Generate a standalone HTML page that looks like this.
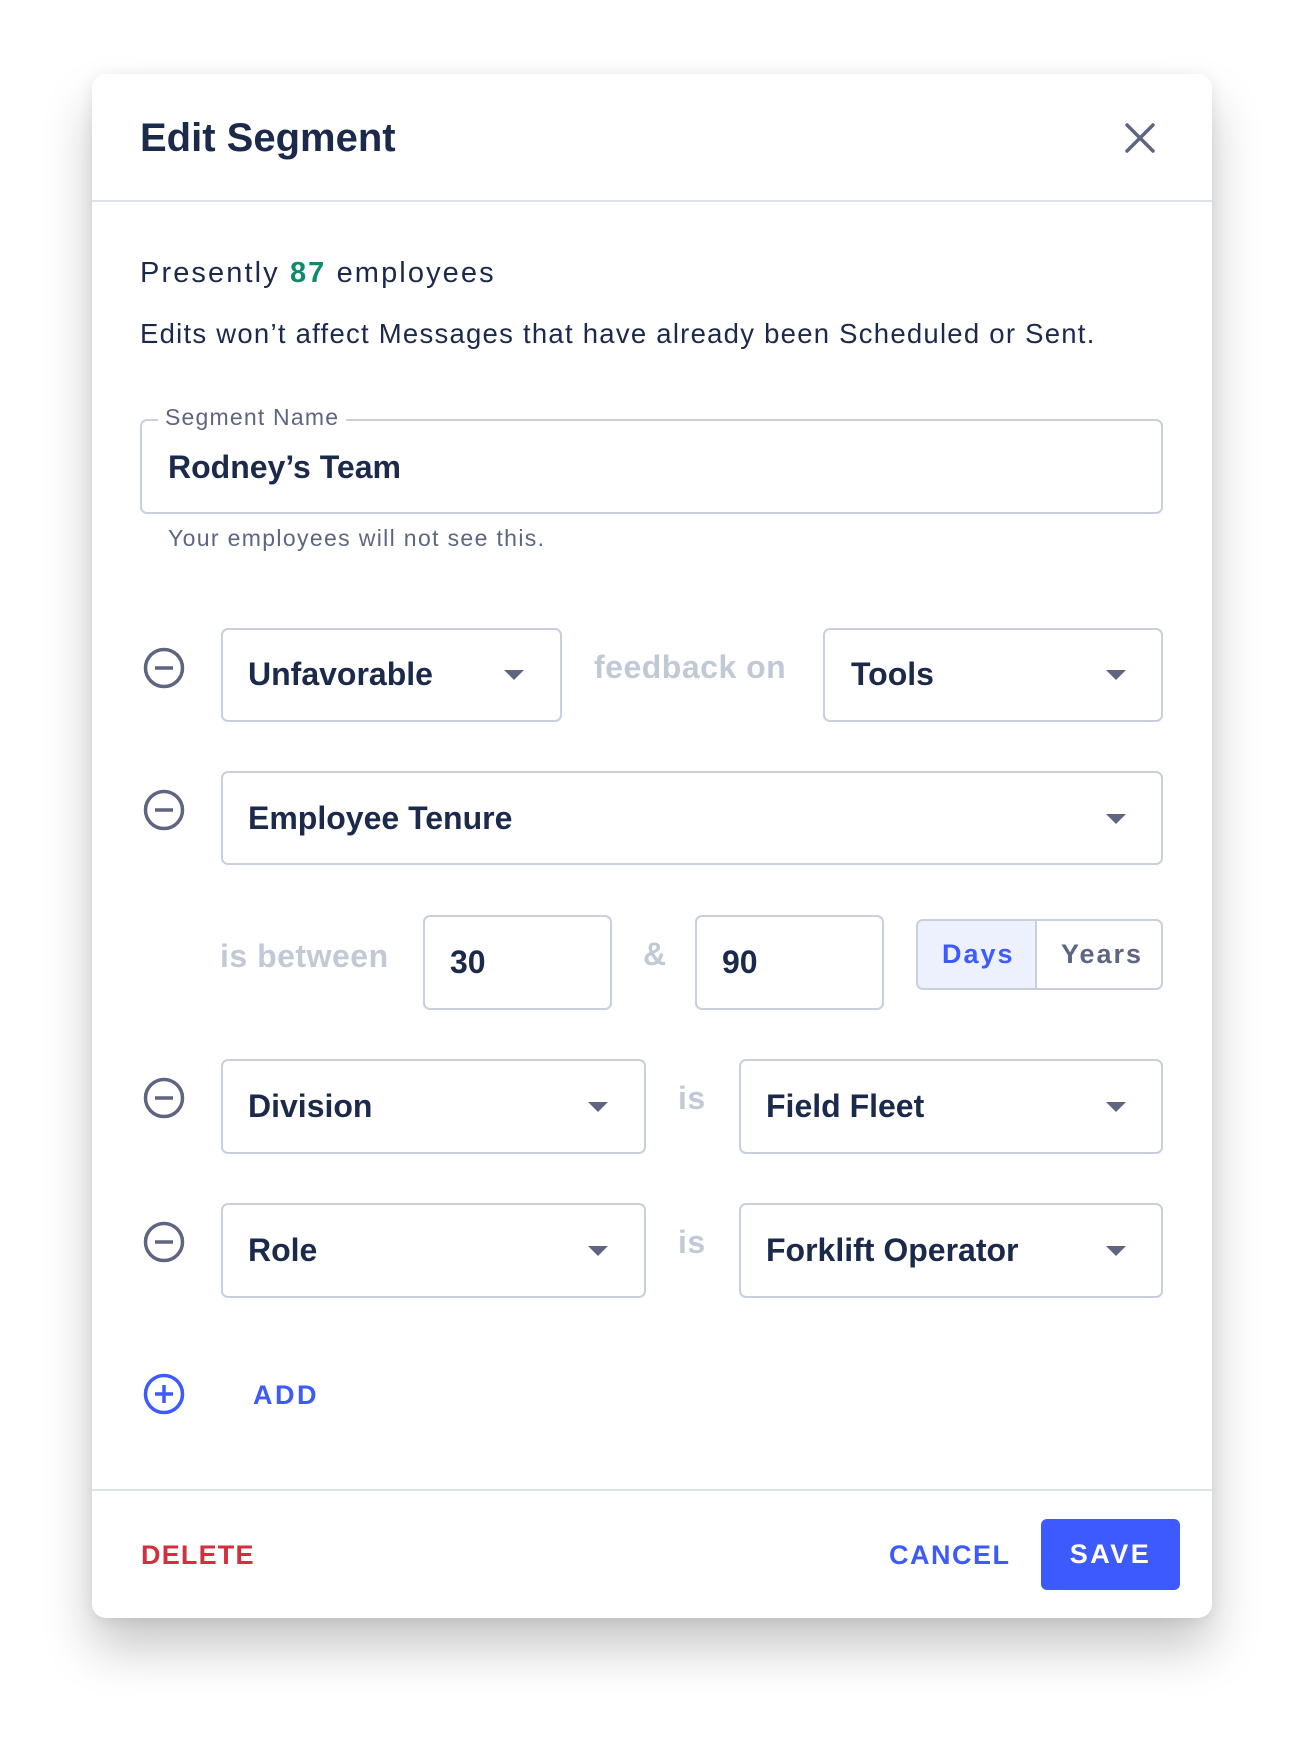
<!DOCTYPE html>
<html><head><meta charset="utf-8"><style>
*{box-sizing:border-box;margin:0;padding:0}
body{width:1304px;height:1742px;background:#fff;font-family:"Liberation Sans",sans-serif;position:relative;overflow:hidden;color:#1b2a4a}
.card{position:absolute;left:92px;top:74px;width:1120px;height:1544px;background:#fff;border-radius:14px;box-shadow:0 30px 50px rgba(0,0,0,0.22),0 2px 14px rgba(0,0,0,0.08)}
.a{position:absolute}
.box{position:absolute;border:2px solid #c9cfdc;border-radius:7px;background:#fff}
.val{position:absolute;font-weight:bold;font-size:32px;color:#1b2a4a}
.caret{position:absolute;width:0;height:0;border-left:10px solid transparent;border-right:10px solid transparent;border-top:10px solid #5d6580}
.grey{position:absolute;color:#c2c9d6;font-size:32px;font-weight:bold;letter-spacing:0.5px}
</style></head><body>
<div class="card"></div>
<div class="a" style="left:140px;top:116px;font-size:40px;font-weight:bold;color:#1b2a4a">Edit Segment</div>
<svg class="a" style="left:1124px;top:122px" width="32" height="32" viewBox="0 0 32 32"><path d="M3 3L29 29M29 3L3 29" stroke="#5d6580" stroke-width="3.5" stroke-linecap="round"/></svg>
<div class="a" style="left:92px;top:200px;width:1120px;height:2px;background:#dde1e8"></div>
<div class="a" style="left:140px;top:257px;font-size:29px;letter-spacing:2.1px;color:#1b2a4a">Presently <b style="color:#0e8a6f">87</b> employees</div>
<div class="a" style="left:140px;top:318px;font-size:27.5px;letter-spacing:1.25px;color:#1b2a4a">Edits won’t affect Messages that have already been Scheduled or Sent.</div>
<div class="box" style="left:140px;top:419px;width:1023px;height:95px"></div>
<div class="a" style="left:158px;top:404px;background:#fff;padding:0 7px;font-size:23px;letter-spacing:1.2px;color:#5d6580">Segment Name</div>
<div class="val" style="left:168px;top:449px;font-size:32px">Rodney’s Team</div>
<div class="a" style="left:168px;top:525px;font-size:23px;letter-spacing:1.35px;color:#5d6580">Your employees will not see this.</div>

<svg class="a" style="left:143px;top:647px" width="42" height="42"><circle cx="21" cy="21" r="18.5" fill="none" stroke="#5d6580" stroke-width="3.5"/><path d="M12 21H30" stroke="#5d6580" stroke-width="3.5"/></svg>
<div class="box" style="left:221px;top:628px;width:341px;height:94px"></div>
<div class="val" style="left:248px;top:656px">Unfavorable</div>
<div class="caret" style="left:504px;top:670px"></div>
<div class="grey" style="left:594px;top:649px">feedback on</div>
<div class="box" style="left:823px;top:628px;width:340px;height:94px"></div>
<div class="val" style="left:851px;top:656px">Tools</div>
<div class="caret" style="left:1106px;top:670px"></div>

<svg class="a" style="left:143px;top:789px" width="42" height="42"><circle cx="21" cy="21" r="18.5" fill="none" stroke="#5d6580" stroke-width="3.5"/><path d="M12 21H30" stroke="#5d6580" stroke-width="3.5"/></svg>
<div class="box" style="left:221px;top:771px;width:942px;height:94px"></div>
<div class="val" style="left:248px;top:800px">Employee Tenure</div>
<div class="caret" style="left:1106px;top:814px"></div>

<div class="grey" style="left:220px;top:938px">is between</div>
<div class="box" style="left:423px;top:915px;width:189px;height:95px"></div>
<div class="val" style="left:450px;top:944px">30</div>
<div class="grey" style="left:643px;top:936px">&amp;</div>
<div class="box" style="left:695px;top:915px;width:189px;height:95px"></div>
<div class="val" style="left:722px;top:944px">90</div>
<div class="box" style="left:916px;top:919px;width:247px;height:71px;overflow:hidden">
<div class="a" style="left:0;top:0;width:119px;height:67px;background:#edf1fd;border-right:2px solid #c9cfdc"></div>
<div class="a" style="left:24px;top:18px;font-size:27px;font-weight:bold;letter-spacing:2px;color:#3d5afe">Days</div>
<div class="a" style="left:143px;top:18px;font-size:27px;font-weight:bold;letter-spacing:2px;color:#5d6580">Years</div>
</div>

<svg class="a" style="left:143px;top:1077px" width="42" height="42"><circle cx="21" cy="21" r="18.5" fill="none" stroke="#5d6580" stroke-width="3.5"/><path d="M12 21H30" stroke="#5d6580" stroke-width="3.5"/></svg>
<div class="box" style="left:221px;top:1059px;width:425px;height:95px"></div>
<div class="val" style="left:248px;top:1088px">Division</div>
<div class="caret" style="left:588px;top:1102px"></div>
<div class="grey" style="left:678px;top:1080px">is</div>
<div class="box" style="left:739px;top:1059px;width:424px;height:95px"></div>
<div class="val" style="left:766px;top:1088px">Field Fleet</div>
<div class="caret" style="left:1106px;top:1102px"></div>

<svg class="a" style="left:143px;top:1221px" width="42" height="42"><circle cx="21" cy="21" r="18.5" fill="none" stroke="#5d6580" stroke-width="3.5"/><path d="M12 21H30" stroke="#5d6580" stroke-width="3.5"/></svg>
<div class="box" style="left:221px;top:1203px;width:425px;height:95px"></div>
<div class="val" style="left:248px;top:1232px">Role</div>
<div class="caret" style="left:588px;top:1246px"></div>
<div class="grey" style="left:678px;top:1224px">is</div>
<div class="box" style="left:739px;top:1203px;width:424px;height:95px"></div>
<div class="val" style="left:766px;top:1232px">Forklift Operator</div>
<div class="caret" style="left:1106px;top:1246px"></div>

<svg class="a" style="left:143px;top:1373px" width="42" height="42"><circle cx="21" cy="21" r="18.5" fill="none" stroke="#3d5afe" stroke-width="3.5"/><path d="M12 21H30M21 12V30" stroke="#3d5afe" stroke-width="3.5"/></svg>
<div class="a" style="left:253px;top:1380px;font-size:27px;font-weight:bold;letter-spacing:2.5px;color:#3d5afe">ADD</div>

<div class="a" style="left:92px;top:1489px;width:1120px;height:2px;background:#dde1e8"></div>
<div class="a" style="left:141px;top:1540px;font-size:27px;font-weight:bold;letter-spacing:1.2px;color:#d32f3c">DELETE</div>
<div class="a" style="left:889px;top:1540px;font-size:27px;font-weight:bold;letter-spacing:1.5px;color:#3d5afe">CANCEL</div>
<div class="a" style="left:1041px;top:1519px;width:139px;height:71px;background:#3d5afe;border-radius:6px;color:#fff;font-size:27px;font-weight:bold;letter-spacing:2.5px;text-align:center;line-height:71px">SAVE</div>
</body></html>
